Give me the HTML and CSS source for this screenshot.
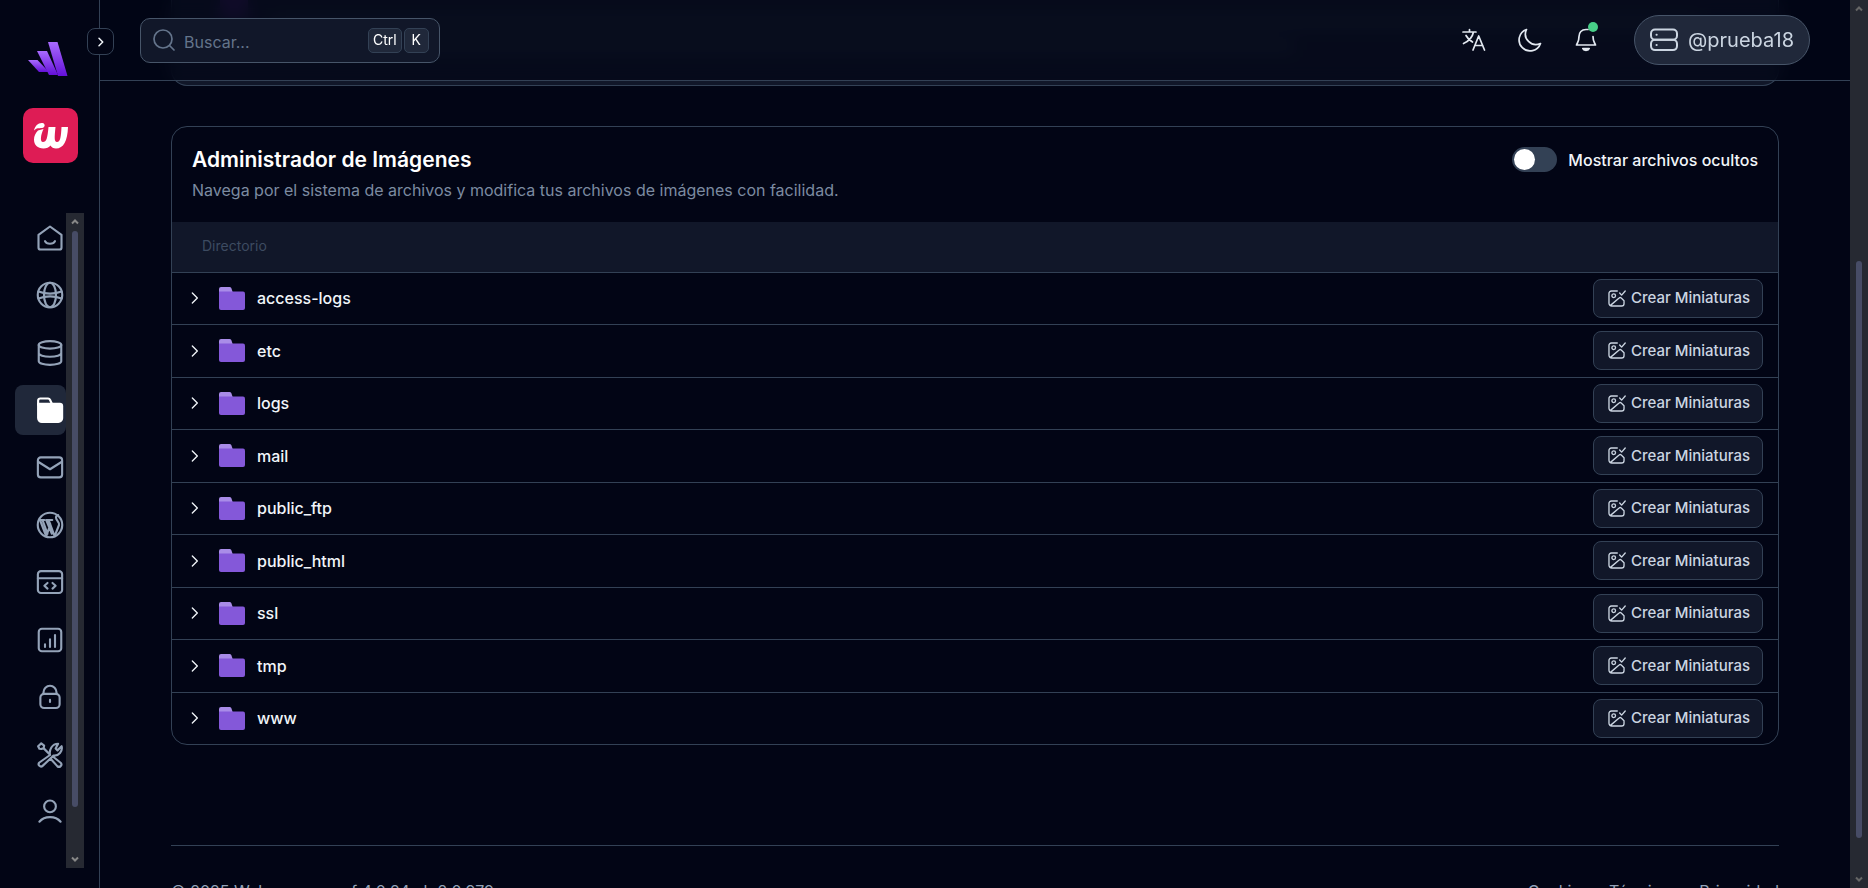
FILE: index.html
```html
<!DOCTYPE html>
<html lang="es">
<head>
<meta charset="utf-8">
<meta name="viewport" content="width=device-width, initial-scale=1">
<title>Administrador de Imágenes</title>
<link rel="stylesheet" href="styles.css">
</head>
<body>
<svg class="sprite" aria-hidden="true">
  <symbol id="chevron" viewBox="0 0 24 24"><path d="M8 4.500l7.500 7.500L8 19.500"/></symbol>
  <symbol id="folder" viewBox="0 0 26 23"><path fill="#a98ce8" stroke="none" d="M0 6V2a2 2 0 0 1 2-2h8.500a2 2 0 0 1 1.800 1.100L14 6z"/><path fill="#8458d9" stroke="none" d="M0 4.500h24a2 2 0 0 1 2 2V21a2 2 0 0 1-2 2H2a2 2 0 0 1-2-2z"/></symbol>
  <symbol id="thumb" viewBox="0 0 24 24"><path d="M13 2.500H5.500a3 3 0 0 0-3 3V18a3.500 3.500 0 0 0 3.500 3.500h12.500a3 3 0 0 0 3-3v-3.800L18 11.400a2 2 0 0 0-2.700 0L4 21"/><circle cx="8.500" cy="8.500" r="2.300"/><path d="M16 5l2.500 2.700L23 2.500"/></symbol>
</svg>
<div class="app">
  <aside class="sidebar">
    <a class="brand" href="#" aria-label="Inicio">
      <svg width="40" height="34" viewBox="0 0 40 34"><defs><linearGradient id="lg" x1="0" y1="0" x2="0" y2="1"><stop offset="0" stop-color="#a96bff"/><stop offset="1" stop-color="#6410d8"/></linearGradient></defs><path fill="url(#lg)" d="M0 18h9.500L21 30h-10z"/><path fill="url(#lg)" d="M9 9h10l11 24H21z"/><path fill="url(#lg)" d="M20 0h9.500L39.500 34H30z"/></svg>
    </a>
    <button class="toggle" type="button" aria-label="Expandir menú"><svg width="12" height="12"><use href="#chevron"/></svg></button>
    <a class="product" href="#" aria-label="Panel">
      <svg width="55" height="55" viewBox="0 0 55 55"><path fill="#fff" d="M15 22.500l5.500-1.500c-2.500 5-4 13-.5 13s4.500-4 5.500-15h7c-1 10-1.500 15 1.500 15 3.500 0 4-6 4.500-15h6.500c-.5 14-4.500 21.500-12 21.500-2.500 0-4.500-1-5.500-3-1.500 2-4 3-7 3-6 0-9.500-3.500-9.500-9 0-3.500 1.500-6.500 4-9z"/><path fill="#fff" d="M11 22.500c1-5 4.500-8 8.500-7.500 3 .5 3 4.500-.5 5-3 .3-5.500-.2-8 2.500z"/></svg>
    </a>
    <div class="menu">
      <nav class="menu-list" aria-label="Principal">
        <a href="#" aria-label="Inicio"><svg viewBox="0 0 24 24"><path d="M2.800 9.500 12 2.800l9.200 6.700V19.500a1.700 1.700 0 0 1-1.700 1.700h-15a1.700 1.700 0 0 1-1.700-1.700z"/><path d="M8 14.500c1.300 2.800 6.700 2.800 8 0"/></svg></a>
        <a href="#" aria-label="Dominios"><svg viewBox="0 0 24 24"><circle cx="12" cy="12" r="9.800"/><ellipse cx="12" cy="12" rx="4.800" ry="9.800"/><path d="M2.800 9.200c5.500 2 13 2 18.400 0M2.800 14.800c5.500-2 13-2 18.400 0"/></svg></a>
        <a href="#" aria-label="Bases de datos"><svg viewBox="0 0 24 24"><ellipse cx="12" cy="5.500" rx="9" ry="3"/><path d="M3 5.500v13c0 1.700 4 3 9 3s9-1.300 9-3v-13M3 12c0 1.700 4 3 9 3s9-1.300 9-3"/></svg></a>
        <a class="active" href="#" aria-label="Archivos" aria-current="page"><svg viewBox="0 0 24 24"><path d="M2.500 8V4.500A1.700 1.700 0 0 1 4.200 2.800h6.300a1.700 1.700 0 0 1 1.500 1L13.500 7"/><path class="solid" d="M2.500 7h17.500a1.700 1.700 0 0 1 1.700 1.700V18.500a3 3 0 0 1-3 3h-13a3 3 0 0 1-3.200-3z"/></svg></a>
        <a href="#" aria-label="Correo"><svg viewBox="0 0 24 24"><rect x="2.300" y="3.500" width="19.400" height="16" rx="2.300"/><path d="M2.500 7 12 13l9.500-6"/></svg></a>
        <a href="#" aria-label="WordPress"><svg viewBox="0 0 24 24"><circle cx="12" cy="12" r="9.800"/><path d="M4 8l5 13 3.300-9.500L10.800 8M12.200 11.500 15.700 21l3.500-9c.7-2.500-2.500-3.500-2.400-6 0-1 .8-1.800 1.700-2M9 8l4.500 11M3.500 8h4M9.300 8h4.500M6 8l4 11"/></svg></a>
        <a href="#" aria-label="Desarrollo"><svg viewBox="0 0 24 24"><rect x="2.300" y="3.300" width="19.400" height="17.500" rx="2.500"/><path d="M2.300 9h19.400M10 12.800 7.500 15l2.500 2.300M14 12.800l2.500 2.200-2.500 2.300"/></svg></a>
        <a href="#" aria-label="Estadísticas"><svg viewBox="0 0 24 24"><rect x="3" y="3" width="18" height="18" rx="2.500"/><path d="M8 15.500V17.500M12 11.500v6M16 8v9.500"/></svg></a>
        <a href="#" aria-label="Seguridad"><svg viewBox="0 0 24 24"><rect x="4.300" y="9.500" width="15.400" height="11.300" rx="3"/><path d="M6.800 9.500V8.200a5.200 5.200 0 0 1 10.400 0v1.300M12 14.300v1.700"/></svg></a>
        <a href="#" aria-label="Herramientas"><svg viewBox="0 0 24 24"><path d="M2.500 5 5 2.700l2.300 1.800-.3 2L5 7.200 3.500 7zM6.800 6.500l5 5M14 13l6.500 5.200a1.900 1.900 0 0 1-2.700 2.700L12.500 15M12 12c-.8-4 1.500-9 6.500-9l-2 3.800 1.500 1.500L21.300 5c1 4-2.300 8-6.500 7.500L6.300 20.500c-2 2-4.500-.7-2.800-2.500z"/></svg></a>
        <a href="#" aria-label="Usuario"><svg viewBox="0 0 24 24"><circle cx="12" cy="7.500" r="4.700"/><path d="M3.500 19.800c4-5 13-5 17 0"/></svg></a>
      </nav>
      <div class="scrollbar scrollbar-menu" aria-hidden="true">
        <svg viewBox="0 0 18 18"><path d="M6 10.500l3-3 3 3"/></svg><span class="thumb"></span><span class="rest"></span><svg viewBox="0 0 18 18"><path d="M6 7.500l3 3 3-3"/></svg>
      </div>
    </div>
  </aside>

  <div class="page">
    <header class="topbar">
      <label class="search">
        <svg width="24" height="24" viewBox="0 0 24 24"><circle cx="11" cy="11" r="9"/><path d="M17.500 17.500 22 22"/></svg>
        <input type="text" placeholder="Buscar..." aria-label="Buscar">
        <span class="keys"><kbd>Ctrl</kbd><kbd>K</kbd></span>
      </label>
      <div class="actions">
        <button class="icon-btn" type="button" aria-label="Idioma"><svg viewBox="0 0 24 24"><path d="M1 4h13M7.500 1.500V4M11.500 4C10.500 9 6 13.500 1.500 15.500M4 7.500c1.500 3 4 5 6.500 6.500M11 22l5.700-14L22.500 22M13 17.500h7.800"/></svg></button>
        <button class="icon-btn" type="button" aria-label="Tema oscuro"><svg viewBox="0 0 24 24"><path d="M8.500 1.500A11 11 0 1 0 22.500 15.500 10.500 10.500 0 0 1 8.500 1.500z"/></svg></button>
        <button class="icon-btn" type="button" aria-label="Notificaciones"><svg viewBox="0 0 24 24"><path d="M12 1.500c-4.500 0-7 3-7 7 0 5-1.500 6-2.500 8.500h19C20.500 14.500 19 13.500 19 8.500M12 1.500h2"/><path class="solid" d="M8.800 20.500h6.400c-.8 2.500-5.600 2.500-6.400 0z"/></svg><span class="dot"></span></button>
        <button class="user" type="button"><svg viewBox="0 0 28 24"><rect x="1" y="1.500" width="26" height="10.300" rx="4"/><rect x="1" y="11.800" width="26" height="10.300" rx="4"/><path d="M6.500 6.700h.2M6.500 17h.2"/></svg>@prueba18</button>
      </div>
    </header>

    <main class="content">
      <section class="hero" aria-hidden="true"><i></i><div><b></b><b></b></div></section>
      <section class="card">
        <div class="card-head">
          <div>
            <h2>Administrador de Imágenes</h2>
            <p>Navega por el sistema de archivos y modifica tus archivos de imágenes con facilidad.</p>
          </div>
          <label class="switch"><input type="checkbox" role="switch">Mostrar archivos ocultos</label>
        </div>
        <table>
          <thead><tr><th scope="col" colspan="2">Directorio</th></tr></thead>
          <tbody>
            <tr><td><div class="entry"><button type="button" aria-label="Abrir access-logs"><svg><use href="#chevron"/></svg></button><svg class="folder"><use href="#folder"/></svg>access-logs</div></td><td><button class="make" type="button"><svg><use href="#thumb"/></svg>Crear Miniaturas</button></td></tr>
            <tr><td><div class="entry"><button type="button" aria-label="Abrir etc"><svg><use href="#chevron"/></svg></button><svg class="folder"><use href="#folder"/></svg>etc</div></td><td><button class="make" type="button"><svg><use href="#thumb"/></svg>Crear Miniaturas</button></td></tr>
            <tr><td><div class="entry"><button type="button" aria-label="Abrir logs"><svg><use href="#chevron"/></svg></button><svg class="folder"><use href="#folder"/></svg>logs</div></td><td><button class="make" type="button"><svg><use href="#thumb"/></svg>Crear Miniaturas</button></td></tr>
            <tr><td><div class="entry"><button type="button" aria-label="Abrir mail"><svg><use href="#chevron"/></svg></button><svg class="folder"><use href="#folder"/></svg>mail</div></td><td><button class="make" type="button"><svg><use href="#thumb"/></svg>Crear Miniaturas</button></td></tr>
            <tr><td><div class="entry"><button type="button" aria-label="Abrir public_ftp"><svg><use href="#chevron"/></svg></button><svg class="folder"><use href="#folder"/></svg>public_ftp</div></td><td><button class="make" type="button"><svg><use href="#thumb"/></svg>Crear Miniaturas</button></td></tr>
            <tr><td><div class="entry"><button type="button" aria-label="Abrir public_html"><svg><use href="#chevron"/></svg></button><svg class="folder"><use href="#folder"/></svg>public_html</div></td><td><button class="make" type="button"><svg><use href="#thumb"/></svg>Crear Miniaturas</button></td></tr>
            <tr><td><div class="entry"><button type="button" aria-label="Abrir ssl"><svg><use href="#chevron"/></svg></button><svg class="folder"><use href="#folder"/></svg>ssl</div></td><td><button class="make" type="button"><svg><use href="#thumb"/></svg>Crear Miniaturas</button></td></tr>
            <tr><td><div class="entry"><button type="button" aria-label="Abrir tmp"><svg><use href="#chevron"/></svg></button><svg class="folder"><use href="#folder"/></svg>tmp</div></td><td><button class="make" type="button"><svg><use href="#thumb"/></svg>Crear Miniaturas</button></td></tr>
            <tr><td><div class="entry"><button type="button" aria-label="Abrir www"><svg><use href="#chevron"/></svg></button><svg class="folder"><use href="#folder"/></svg>www</div></td><td><button class="make" type="button"><svg><use href="#thumb"/></svg>Crear Miniaturas</button></td></tr>
          </tbody>
        </table>
      </section>
      <footer class="footer">
        <span>© 2025 Webempresa wf 4.0.24 · h 2.0.979</span>
        <nav aria-label="Legal"><a href="#">Cookies</a><a href="#">Términos</a><a href="#">Privacidad</a></nav>
      </footer>
    </main>
  </div>
  <div class="scrollbar scrollbar-page" aria-hidden="true">
    <svg viewBox="0 0 18 18"><path d="M6 10.500l3-3 3 3"/></svg><span class="before"></span><span class="thumb"></span><span class="rest"></span><svg viewBox="0 0 18 18"><path d="M6 7.500l3 3 3-3"/></svg>
  </div>
</div>
</body>
</html>
```
FILE: styles.css
```css
* { box-sizing: border-box; }
:root {
  --bg: #020515;
  --panel: #111729;
  --raised: #20283a;
  --line: #334155;
  --muted: #94a3b8;
  --text: #f1f5f9;
}
body {
  margin: 0;
  background: var(--bg);
  color: var(--text);
  font-family: Inter, "Open Sans", sans-serif;
  font-size: 16px;
  line-height: 24px;
}
svg { fill: none; stroke: currentColor; stroke-width: 1.700; stroke-linecap: round; stroke-linejoin: round; flex: none; }
.solid { fill: currentColor; }
.sprite { position: absolute; width: 0; height: 0; }
button { font: inherit; color: inherit; background: none; border: 0; padding: 0; display: flex; align-items: center; justify-content: center; cursor: pointer; }
a { color: inherit; text-decoration: none; }
.app { display: flex; height: 100vh; overflow: hidden; }

.sidebar { position: relative; z-index: 3; display: flex; flex-direction: column; width: 100px; flex: none; padding: 42px 0 20px; border-right: 1px solid var(--line); background: var(--bg); }
.brand { display: flex; margin: 0 0 32px 28px; }
.brand svg { stroke: none; }
.toggle { position: absolute; top: 28px; right: -15px; width: 27px; height: 27px; border: 1px solid var(--line); border-radius: 8px; background: var(--bg); }
.toggle svg { stroke-width: 3; }
.product { display: flex; width: 55px; height: 55px; margin: 0 0 50px 23px; border-radius: 10px; background: #de1c55; }
.product svg { stroke: none; }
.menu { display: flex; flex: 1; min-height: 0; margin: 0 15px; }
.menu-list { display: flex; flex-direction: column; justify-content: space-between; width: 51px; padding-bottom: 31px; color: var(--muted); }
.menu-list a { display: flex; align-items: center; height: 50px; padding-left: 20px; border-radius: 8px; }
.menu-list svg { width: 30px; height: 30px; }
.menu-list .active { background: var(--raised); color: #fff; }

.scrollbar { display: flex; flex-direction: column; align-items: center; width: 18px; flex: none; background: #262932; color: #888; }
.scrollbar svg { width: 18px; height: 18px; stroke-width: 2; stroke-linecap: butt; stroke-linejoin: miter; }
.scrollbar-page { color: #666; }
.scrollbar .thumb { width: 6px; border-radius: 3px; background: #474c66; }
.scrollbar-menu .thumb { flex: 576; }
.scrollbar-menu .rest { flex: 43; }
.scrollbar-page .before { flex: 243; }
.scrollbar-page .thumb { flex: 577; }
.scrollbar-page .rest { flex: 32; }

.page { position: relative; flex: 1; min-width: 0; }
.topbar { position: absolute; inset: 0 0 auto; z-index: 2; display: flex; align-items: center; justify-content: space-between; height: 81px; padding: 0 40px; border-bottom: 1px solid var(--line); background: rgb(2 5 21 / 70%); backdrop-filter: blur(8px); }
.search { display: flex; align-items: center; gap: 8px; width: 300px; height: 45px; padding: 0 10px 0 11px; border: 1px solid #475569; border-radius: 10px; background: var(--panel); color: #64748b; }
.search input { flex: 1; min-width: 0; padding: 3px 0 0; border: 0; outline: 0; background: none; color: var(--text); font: inherit; }
.search input::placeholder { color: #64748b; opacity: 1; }
.keys { display: flex; gap: 2px; }
kbd { height: 25px; padding: 0 4px; border: 1px solid var(--line); border-radius: 5px; background: var(--raised); color: #fff; font: 14px/22px Inter, sans-serif; }
kbd + kbd { padding: 0 7px; }
.actions { display: flex; align-items: center; gap: 32px; color: #e2e8f0; }
.icon-btn { position: relative; width: 24px; height: 24px; }
.icon-btn svg { width: 24px; height: 24px; }
.dot { position: absolute; top: -6px; right: 0; width: 10px; height: 10px; border-radius: 50%; background: #48cf88; }
.user { gap: 10px; height: 50px; margin-left: 4px; padding: 0 15px; border: 1px solid #475569; border-radius: 25px; background: var(--raised); color: #cbd5e1; font-size: 20px; }
.user svg { width: 28px; height: 24px; stroke-width: 2; }

.content { padding: 0 71px; }
.hero { display: flex; gap: 24px; height: 86px; padding: 0 48px; border: 1px solid var(--line); border-top: 0; border-radius: 0 0 16px 16px; background: var(--panel); }
.hero i { width: 28px; height: 20px; background: #331a55; }
.hero div { display: flex; flex-direction: column; flex: 1; gap: 12px; padding-top: 16px; }
.hero b { height: 12px; width: 98%; background: #202638; }
.hero b + b { width: 70%; }

.card { margin-top: 40px; border: 1px solid var(--line); border-radius: 16px; overflow: hidden; }
.card-head { display: flex; justify-content: space-between; align-items: flex-start; padding: 19px 20px; }
h2 { margin: 0; color: #fff; font-size: 21px; font-weight: 600; line-height: 28px; }
.card-head p { margin: 4px 0 0; color: #7c8ba1; line-height: 25px; }
.switch { display: flex; align-items: center; gap: 11px; height: 27px; font-weight: 500; }
.switch input { appearance: none; width: 45px; height: 25px; margin: 0; padding: 2px; border-radius: 13px; background: var(--line); }
.switch input::before { content: ""; display: block; width: 21px; height: 21px; border-radius: 50%; background: #fff; }
.switch input:checked::before { margin-left: auto; }
table { width: 100%; border-spacing: 0; }
th { height: 50px; padding: 0 30px 2px; background: var(--panel); color: #3d4b61; font-size: 14px; font-weight: 400; text-align: left; }
td { height: 52px; padding: 0 15px 1px; border-top: 1px solid var(--line); }
tr:nth-child(even) td { height: 53px; }
td:last-child { width: 1px; white-space: nowrap; }
.entry { display: flex; align-items: center; gap: 12px; font-weight: 500; }
.entry button { width: 16px; height: 16px; margin-right: 4px; }
.entry button svg { width: 16px; height: 16px; stroke-width: 2; }
.folder { width: 26px; height: 23px; }
.make { gap: 5px; height: 39px; padding: 0 12px 0 13px; border: 1px solid var(--line); border-radius: 8px; background: var(--panel); color: #cbd5e1; font-size: 15px; font-weight: 500; }
.make svg { width: 19px; height: 19px; }
.footer { display: flex; justify-content: space-between; margin-top: 100px; padding-top: 33px; border-top: 1px solid var(--line); color: var(--muted); }
.footer nav { display: flex; gap: 20px; }
```
